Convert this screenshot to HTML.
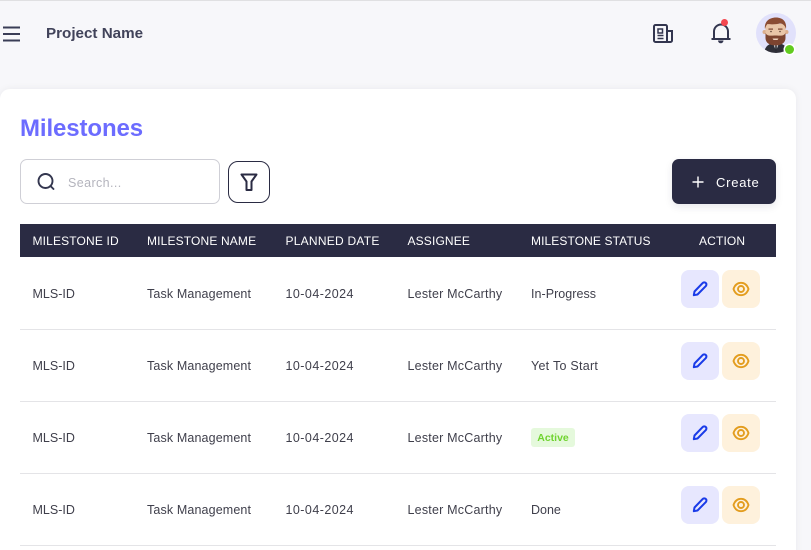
<!DOCTYPE html>
<html>
<head>
<meta charset="utf-8">
<style>
html,body{margin:0;padding:0;width:811px;height:550px;overflow:hidden;background:#f7f7fa;font-family:"Liberation Sans",sans-serif;}
.a{position:absolute;white-space:nowrap;}
#page{position:relative;width:811px;height:550px;overflow:hidden;}
.th{color:#fff;font-size:12px;line-height:14px;top:234px;letter-spacing:.15px;}
.td{color:#3f3f4b;font-size:12.5px;line-height:14px;letter-spacing:.13px;}
.id{letter-spacing:0;}
.dt{letter-spacing:.45px;}
.nm{letter-spacing:.21px;}
.line{position:absolute;left:20px;width:756px;height:1px;background:#e4e4e7;}
.btn{position:absolute;width:38px;height:38px;border-radius:8px;}
.e{left:681px;background:#e7e7fe;}
.v{left:722px;background:#fef1dc;}
.btn svg{position:absolute;left:9px;top:9px;}
</style>
</head>
<body>
<div id="page">
<div class="a" style="left:0;top:0;width:811px;height:1px;background:#e0e0e2"></div>

<svg class="a" style="left:3px;top:26px" width="17" height="16" viewBox="0 0 17 16"><path d="M0 1.500H17M0 8H17M0 14.500H17" stroke="#3a3d56" stroke-width="1.900" fill="none"/></svg>
<div class="a" style="left:46px;top:25px;font-size:15.200px;line-height:17px;font-weight:700;color:#41435a;">Project Name</div>

<svg class="a" style="left:653px;top:24px" width="20" height="20" viewBox="0 0 20 20" fill="none" stroke="#33364f" stroke-width="2"><path d="M14 18H2.500A1.500 1.500 0 0 1 1 16.500V2.500A1.500 1.500 0 0 1 2.500 1H12.500A1.500 1.500 0 0 1 14 2.500V18H17.500A1.500 1.500 0 0 0 19 16.500V7H14"/><path d="M5 5H9.500V9H5Z" stroke-width="1.500"/><path d="M4.500 11.500H10.500M4.500 14.500H10.500" stroke-width="1.600"/></svg>

<svg class="a" style="left:710px;top:22px" width="22" height="22" viewBox="0 0 22 22" fill="none" stroke="#33364f" stroke-width="2"><path d="M1.500 17H20.500M4 17V9.500a7 7 0 0 1 14 0V17"/><path d="M8 18.500H13.500A2.750 2.750 0 0 1 8 18.500Z" fill="#33364f" stroke="none"/></svg>
<div class="a" style="left:721px;top:18.500px;width:7px;height:7px;border-radius:50%;background:#f4474f"></div>

<div class="a" style="left:756px;top:13px;width:40px;height:40px;border-radius:50%;background:#e1e1fb;overflow:hidden">
<svg width="40" height="40" viewBox="0 0 40 40" style="position:absolute;left:0;top:0">
<path d="M8 40C9 33 13 30 20 30S31 33 32 40Z" fill="#2f2f38"/>
<path d="M17 30L20 38L23 30Z" fill="#e8e8ea"/>
<path d="M19.300 32H20.700L21 38H19Z" fill="#2b2b33"/>
<circle cx="8.500" cy="19" r="2" fill="#dcae8e"/><circle cx="30.500" cy="19" r="2" fill="#dcae8e"/>
<path d="M9.500 11H29.500V24C29.500 29 25 32 19.500 32S9.500 29 9.500 24Z" fill="#e9c5a8"/>
<path d="M9.500 20C11.500 23.500 14 22.500 19.500 22.500S27.500 23.500 29.500 20V25C29.500 30 25 32.500 19.500 32.500S9.500 30 9.500 25Z" fill="#7d4430"/>
<path d="M16.500 25.500H22.500L21.500 27H17.500Z" fill="#ecd0bd"/>
<path d="M9 16C8 9 13 4.500 20 4.500C27 4.500 31 9 30 16C29 12.500 27 10.500 24 10.500C20 11.500 14 11.500 11.500 11C10 12.500 9.500 14 9 16Z" fill="#8a4b33"/>
<rect x="12.500" y="15.500" width="4.500" height="1.200" fill="#7a4530"/><rect x="22" y="15.500" width="4.500" height="1.200" fill="#7a4530"/>
<circle cx="15" cy="18.500" r=".8" fill="#5a4034"/><circle cx="24" cy="18.500" r=".8" fill="#5a4034"/>
</svg>
</div>
<div class="a" style="left:784.500px;top:44.500px;width:9px;height:9px;border-radius:50%;background:#62cb1f;box-shadow:0 0 0 1.500px #fff"></div>

<div class="a" style="left:0;top:89px;width:796px;height:480px;background:#fff;border-radius:10px;box-shadow:0 0 8px rgba(0,0,0,.06)"></div>

<div class="a" style="left:20px;top:114px;font-size:24px;line-height:29px;font-weight:700;color:#6c6cff;letter-spacing:-.1px">Milestones</div>

<div class="a" style="left:20px;top:159px;width:198px;height:43px;border:1px solid #cfcfd6;border-radius:7px;background:#fff"></div>
<svg class="a" style="left:36px;top:172px" width="20" height="20" viewBox="0 0 20 20" fill="none" stroke="#33364f" stroke-width="1.900"><circle cx="9.500" cy="9" r="7"/><path d="M14.500 14L17.500 17" stroke-linecap="round"/></svg>
<div class="a" style="left:68px;top:176px;font-size:12.500px;line-height:14px;color:#b4b4bd;letter-spacing:.4px">Search...</div>

<div class="a" style="left:228px;top:161px;width:40px;height:40px;border:1px solid #2a2b43;border-radius:10px;background:#fff"></div>
<svg class="a" style="left:239px;top:173px" width="20" height="19" viewBox="0 0 20 19" fill="none" stroke="#2a2b43" stroke-width="2" stroke-linejoin="round"><path d="M2.500 1.500H17.500L12.500 8.500V17H7.500V8.500Z"/></svg>

<div class="a" style="left:672px;top:159px;width:104px;height:45px;background:#2a2b43;border-radius:7px;box-shadow:0 3px 8px rgba(42,43,67,.1)"></div>
<svg class="a" style="left:692px;top:176px" width="12" height="12" viewBox="0 0 12 12"><path d="M6 .500V11.500M.500 6H11.500" stroke="#fff" stroke-width="1.400"/></svg>
<div class="a" style="left:716px;top:175px;font-size:13px;line-height:15px;color:#fff;letter-spacing:.75px">Create</div>

<div class="a" style="left:20px;top:224px;width:756px;height:33px;background:#2a2b43"></div>
<div class="a th" style="left:32.500px">MILESTONE ID</div>
<div class="a th" style="left:147px">MILESTONE NAME</div>
<div class="a th" style="left:285.500px;letter-spacing:.25px">PLANNED DATE</div>
<div class="a th" style="left:407.500px">ASSIGNEE</div>
<div class="a th" style="left:531px;letter-spacing:.1px">MILESTONE STATUS</div>
<div class="a th" style="left:699px">ACTION</div>

<div class="a td id" style="left:32.500px;top:287px">MLS-ID</div>
<div class="a td" style="left:147px;top:287px">Task Management</div>
<div class="a td dt" style="left:285.500px;top:287px">10-04-2024</div>
<div class="a td nm" style="left:407.500px;top:287px">Lester McCarthy</div>
<div class="a td" style="left:531px;top:287px;letter-spacing:.04px">In-Progress</div>
<div class="line" style="top:329px"></div>

<div class="a td id" style="left:32.500px;top:359px">MLS-ID</div>
<div class="a td" style="left:147px;top:359px">Task Management</div>
<div class="a td dt" style="left:285.500px;top:359px">10-04-2024</div>
<div class="a td nm" style="left:407.500px;top:359px">Lester McCarthy</div>
<div class="a td" style="left:531px;top:359px;letter-spacing:.27px">Yet To Start</div>
<div class="line" style="top:401px"></div>

<div class="a td id" style="left:32.500px;top:431px">MLS-ID</div>
<div class="a td" style="left:147px;top:431px">Task Management</div>
<div class="a td dt" style="left:285.500px;top:431px">10-04-2024</div>
<div class="a td nm" style="left:407.500px;top:431px">Lester McCarthy</div>
<div class="a" style="left:531px;top:428px;width:44px;height:19px;background:#e5f9dc;border-radius:3px;color:#6fd32f;font-size:10.500px;font-weight:700;line-height:20px;text-align:center">Active</div>
<div class="line" style="top:473px"></div>

<div class="a td id" style="left:32.500px;top:503px">MLS-ID</div>
<div class="a td" style="left:147px;top:503px">Task Management</div>
<div class="a td dt" style="left:285.500px;top:503px">10-04-2024</div>
<div class="a td nm" style="left:407.500px;top:503px">Lester McCarthy</div>
<div class="a td" style="left:531px;top:503px;letter-spacing:0">Done</div>
<div class="line" style="top:545px"></div>

<div class="btn e" style="top:270px"><svg width="20" height="20" viewBox="0 0 20 20" fill="none" stroke="#1a3be8" stroke-width="2" stroke-linejoin="round"><path d="M3.800 16.200L4.500 12.500L12.500 4.200C13.500 3.200 15 3.200 15.800 4C16.700 4.900 16.600 6.200 15.700 7.200L7.500 15.500Z"/></svg></div>
<div class="btn v" style="top:270px"><svg width="20" height="20" viewBox="0 0 20 20" fill="none" stroke="#e39d1f" stroke-width="1.900"><path d="M2.500 10C4 5.500 7 3.800 10 3.800S16 5.500 17.500 10C16 14.500 13 16.200 10 16.200S4 14.500 2.500 10Z"/><circle cx="10" cy="10" r="3"/></svg></div>
<div class="btn e" style="top:342px"><svg width="20" height="20" viewBox="0 0 20 20" fill="none" stroke="#1a3be8" stroke-width="2" stroke-linejoin="round"><path d="M3.800 16.200L4.500 12.500L12.500 4.200C13.500 3.200 15 3.200 15.800 4C16.700 4.900 16.600 6.200 15.700 7.200L7.500 15.500Z"/></svg></div>
<div class="btn v" style="top:342px"><svg width="20" height="20" viewBox="0 0 20 20" fill="none" stroke="#e39d1f" stroke-width="1.900"><path d="M2.500 10C4 5.500 7 3.800 10 3.800S16 5.500 17.500 10C16 14.500 13 16.200 10 16.200S4 14.500 2.500 10Z"/><circle cx="10" cy="10" r="3"/></svg></div>
<div class="btn e" style="top:414px"><svg width="20" height="20" viewBox="0 0 20 20" fill="none" stroke="#1a3be8" stroke-width="2" stroke-linejoin="round"><path d="M3.800 16.200L4.500 12.500L12.500 4.200C13.500 3.200 15 3.200 15.800 4C16.700 4.900 16.600 6.200 15.700 7.200L7.500 15.500Z"/></svg></div>
<div class="btn v" style="top:414px"><svg width="20" height="20" viewBox="0 0 20 20" fill="none" stroke="#e39d1f" stroke-width="1.900"><path d="M2.500 10C4 5.500 7 3.800 10 3.800S16 5.500 17.500 10C16 14.500 13 16.200 10 16.200S4 14.500 2.500 10Z"/><circle cx="10" cy="10" r="3"/></svg></div>
<div class="btn e" style="top:486px"><svg width="20" height="20" viewBox="0 0 20 20" fill="none" stroke="#1a3be8" stroke-width="2" stroke-linejoin="round"><path d="M3.800 16.200L4.500 12.500L12.500 4.200C13.500 3.200 15 3.200 15.800 4C16.700 4.900 16.600 6.200 15.700 7.200L7.500 15.500Z"/></svg></div>
<div class="btn v" style="top:486px"><svg width="20" height="20" viewBox="0 0 20 20" fill="none" stroke="#e39d1f" stroke-width="1.900"><path d="M2.500 10C4 5.500 7 3.800 10 3.800S16 5.500 17.500 10C16 14.500 13 16.200 10 16.200S4 14.500 2.500 10Z"/><circle cx="10" cy="10" r="3"/></svg></div>
</div>
</body>
</html>
